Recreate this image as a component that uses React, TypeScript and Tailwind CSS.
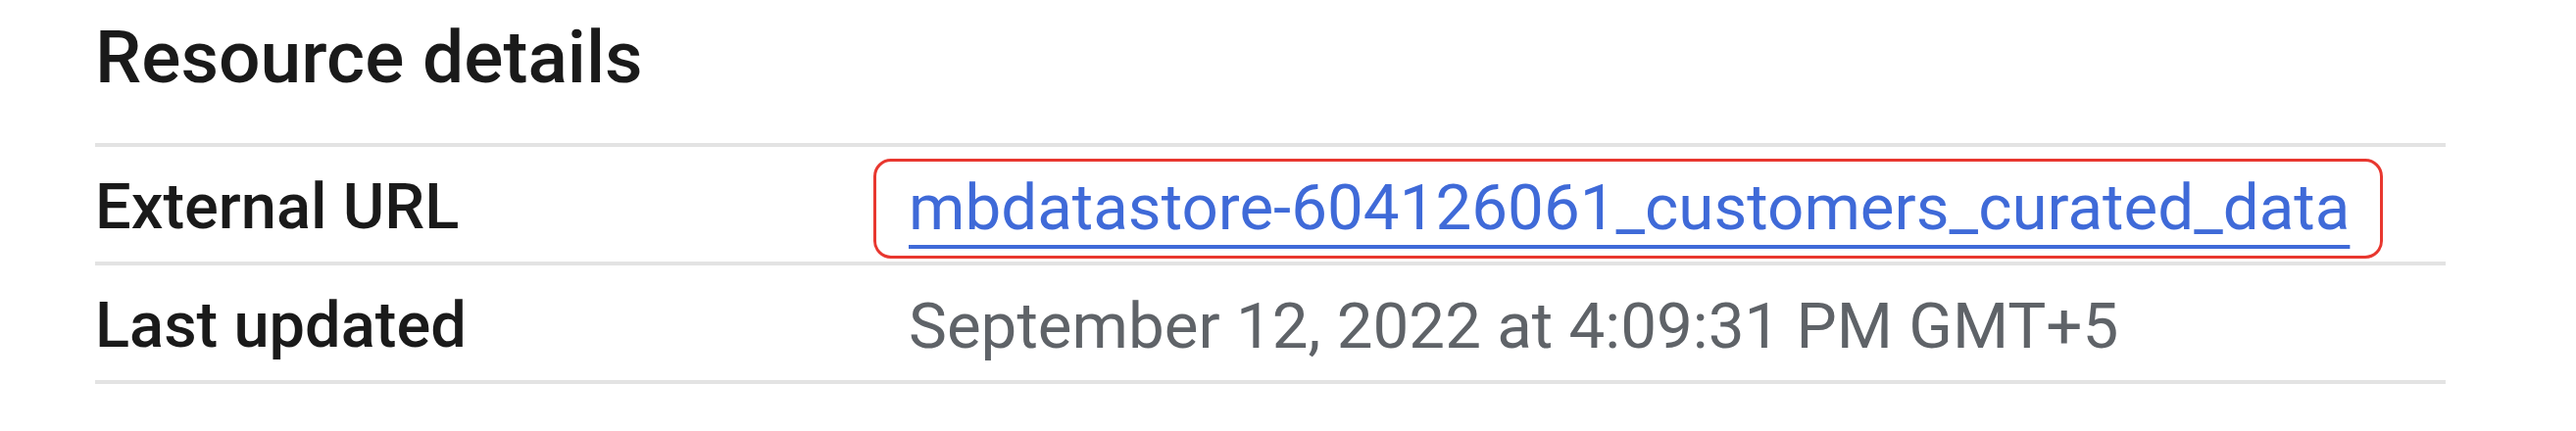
import React from 'react';

const rows = [
  { label: 'External URL', value: 'mbdatastore-604126061_customers_curated_data', link: true },
  { label: 'Last updated', value: 'September 12, 2022 at 4:09:31 PM GMT+5', link: false },
];

export default function App() {
  return (
    <div className="w-[2628px] h-[440px] bg-white font-['Roboto',sans-serif] pl-[97px] pt-[21px]">
      {/* Section title */}
      <h2 className="text-[75px] leading-none font-medium text-[#1a1a1a]">
        Resource details
      </h2>

      <div className="mt-[50px] w-[2398px] border-t-[4px] border-[#e3e3e3]">
        {rows.map((row) => (
          <div
            key={row.label}
            className="flex items-center h-[121px] pt-[6px] border-b-[4px] border-[#e3e3e3]"
          >
            <div className="w-[830px] shrink-0 text-[65px] leading-none font-medium text-[#1a1a1a]">
              {row.label}
            </div>
            {row.link ? (
              <span className="relative">
                {/* annotation box */}
                <span className="absolute -left-[36px] -right-[34px] -top-[17px] -bottom-[20px] border-[3px] border-[#e8372f] rounded-[18px]" />
                <a
                  href="#"
                  className="text-[65.5px] leading-none text-[#3f6ad8] underline decoration-[4px] underline-offset-[16px]"
                >
                  {row.value}
                </a>
              </span>
            ) : (
              <span className="text-[65.5px] leading-none text-[#5f6368]">{row.value}</span>
            )}
          </div>
        ))}
      </div>
    </div>
  );
}
